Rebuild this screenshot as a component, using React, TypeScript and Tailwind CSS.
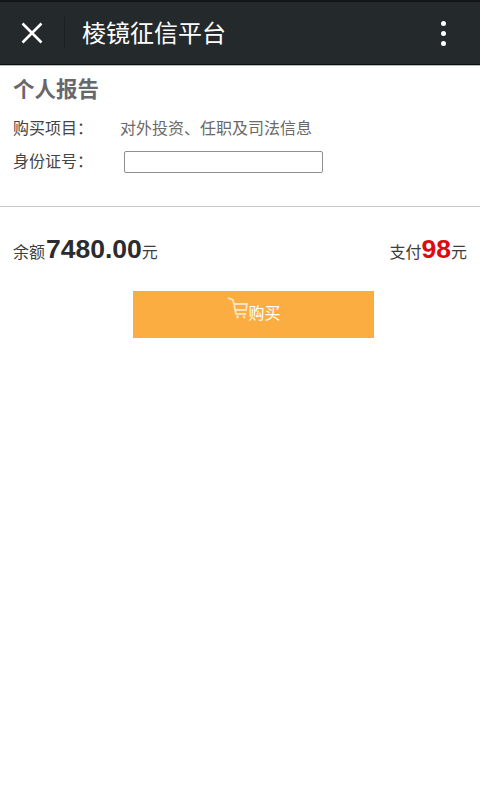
import React from 'react';

const font = { fontFamily: '"Liberation Sans", "Noto Sans CJK SC", sans-serif' };

const App: React.FC = () => {
  return (
    <div className="w-[480px] h-[800px] bg-white overflow-hidden" style={font}>
      {/* title bar */}
      <div className="h-[65px] bg-[#24292b] border-t-[2px] border-t-[#131516] border-b-[1px] border-b-[#0c0d0d] flex items-center">
        <button className="w-[64px] flex justify-center">
          <svg className="w-[24px] h-[24px]" viewBox="0 0 24 24" fill="none" stroke="#ffffff" strokeWidth="2.6">
            <path d="M2.5 2.5 L21.5 21.5 M21.5 2.5 L2.5 21.5" />
          </svg>
        </button>
        <div className="w-px h-[32px] bg-[#1b1f20]" />
        <div className="ml-[17px] mt-[1px] text-[24px] text-white leading-none">棱镜征信平台</div>
        <div className="ml-auto mr-[34px] flex flex-col gap-[5px]">
          <span className="w-[5px] h-[5px] rounded-full bg-white" />
          <span className="w-[5px] h-[5px] rounded-full bg-white" />
          <span className="w-[5px] h-[5px] rounded-full bg-white" />
        </div>
      </div>
      <div className="h-px bg-[#b9bcbe]" />

      {/* form */}
      <div className="h-[141px] border-b border-b-[#c9c9c9] px-[13px]">
        <div className="pt-[9px] text-[21.5px] font-bold leading-[30px] text-[#68686c]">个人报告</div>
        <div className="mt-[12px] flex items-center h-[24px] text-[16px]">
          <span className="w-[107px] text-[#444444]">购买项目：</span>
          <span className="text-[#6a6a6a]">对外投资、任职及司法信息</span>
        </div>
        <div className="mt-[9px] flex items-center text-[16px]">
          <span className="w-[111px] text-[#444444]">身份证号：</span>
          <input className="w-[199px] h-[22px] bg-white border border-[#8f8f8f] rounded-[2px] outline-none" />
        </div>
      </div>

      {/* balance */}
      <div className="mt-[23px] px-[13px] flex justify-between items-baseline text-[16px] text-[#3d3d3d]">
        <div>
          余额<span className="ml-px text-[26.5px] font-bold text-[#2b2b30]">7480.00</span>元
        </div>
        <div>
          支付<span className="text-[26.5px] font-bold text-[#dd0a0f]">98</span>元
        </div>
      </div>

      {/* buy button */}
      <div className="mt-[21px] ml-[133px]">
        <button className="w-[241px] h-[47px] bg-[#fcad41] flex items-start justify-center pt-[6px] text-[16px] text-white">
          <svg className="w-[22px] h-[24px] mt-[-1px]" viewBox="0 0 22 24" fill="none" stroke="#fde3bd" strokeWidth="1.8">
            <path d="M2 2 L7 4 L10 18 H20" />
            <path d="M8 8 H21 L20 14 H9.5" />
            <circle cx="11.5" cy="21" r="1.4" fill="#fde3bd" stroke="none" />
            <circle cx="18" cy="21" r="1.4" fill="#fde3bd" stroke="none" />
          </svg>
          <span className="mt-[5px] leading-[24px]">购买</span>
        </button>
      </div>
    </div>
  );
};

export default App;
